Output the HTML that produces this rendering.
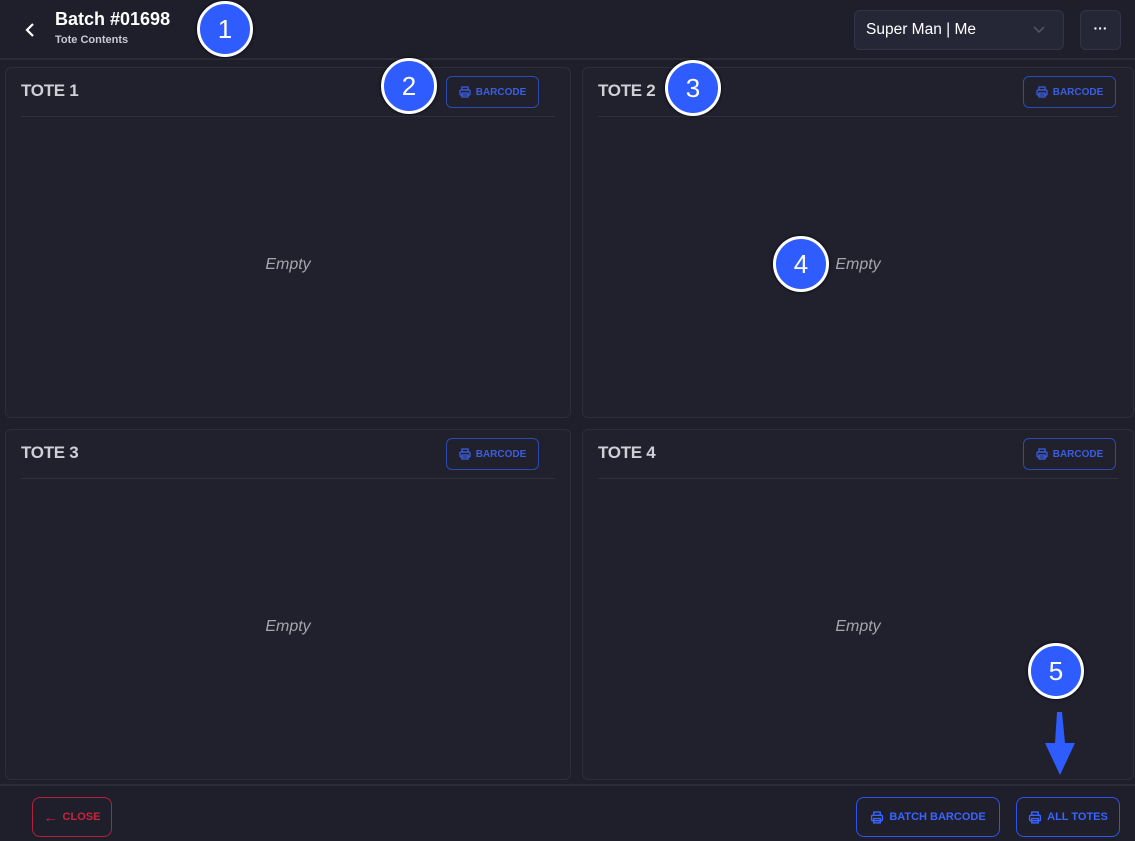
<!DOCTYPE html><html><head><style>
*{box-sizing:border-box;margin:0;padding:0}
body{width:1135px;height:841px;background:#1e1f2a;font-family:"Liberation Sans",sans-serif;position:relative;overflow:hidden;color:#fff}
.hdr{position:absolute;left:0;top:0;width:1135px;height:60px;background:#1e1f2b;border-bottom:2px solid #2b2c3a}
.abs{position:absolute}
.card{position:absolute;background:#20212d;border:1px solid #2d2e3c;border-radius:6px}
.card .t{position:absolute;left:15px;top:13px;font-size:17px;font-weight:bold;color:#cfd0d6;letter-spacing:-0.3px}
.card .ln{position:absolute;left:15px;right:15px;top:48px;border-top:1px solid #2f303e}
.card .e{position:absolute;left:0;right:0;top:188px;text-align:center;font-style:italic;color:#a4a5ad;font-size:16px}
.bc{position:absolute;top:8px;width:93px;height:32px;border:1px solid #2b4bb0;border-radius:6px;color:#3b5de0;font-size:10px;font-weight:bold;display:flex;align-items:center;justify-content:center;gap:5px}
.btn{position:absolute;border:1px solid #2f55e6;border-radius:8px;color:#3a63ff;font-weight:bold;font-size:11px;display:flex;align-items:center;justify-content:center;gap:5px}
.badge{position:absolute;width:56px;height:56px;border-radius:50%;background:#2f5cff;border:3px solid #fff;color:#fff;font-size:26px;display:flex;align-items:center;justify-content:center;box-shadow:0 0 3px #000}
</style></head><body>
<div class="hdr"></div>
<svg class="abs" style="left:24px;top:22px" width="12" height="16" viewBox="0 0 12 16"><path d="M9 2 L3 8 L9 14" stroke="#fff" stroke-width="2.2" fill="none"/></svg>
<div class="abs" style="left:55px;top:9px;font-size:18px;font-weight:bold">Batch #01698</div>
<div class="abs" style="left:55px;top:34px;font-size:11px;font-weight:bold;color:#c8c9d4">Tote Contents</div>
<div class="abs" style="left:854px;top:10px;width:210px;height:40px;border:1px solid #33344a;border-radius:6px;background:#262736;font-size:15.5px;padding:10px 11px">Super Man | Me<svg class="abs" style="right:18px;top:15px" width="12" height="8"><path d="M1 1 L6 6 L11 1" stroke="#555668" stroke-width="1.5" fill="none"/></svg></div>
<div class="abs" style="left:1080px;top:10px;width:41px;height:40px;border:1px solid #33344a;border-radius:6px;background:#262736;text-align:center;font-size:14px;line-height:34px;font-weight:bold">···</div>

<div class="card" style="left:5px;top:67px;width:566px;height:351px"><div class="t">TOTE 1</div><div class="bc" style="left:440px"><svg width="12" height="12" viewBox="0 0 12 12" fill="none" stroke="#3b5de0" stroke-width="1.3"><rect x="3" y="1" width="6" height="3"/><rect x="1" y="4" width="10" height="5" rx="1"/><rect x="3" y="7" width="6" height="4"/></svg>BARCODE</div><div class="ln"></div><div class="e">Empty</div></div>
<div class="card" style="left:582px;top:67px;width:552px;height:351px"><div class="t">TOTE 2</div><div class="bc" style="left:440px"><svg width="12" height="12" viewBox="0 0 12 12" fill="none" stroke="#3b5de0" stroke-width="1.3"><rect x="3" y="1" width="6" height="3"/><rect x="1" y="4" width="10" height="5" rx="1"/><rect x="3" y="7" width="6" height="4"/></svg>BARCODE</div><div class="ln"></div><div class="e">Empty</div></div>
<div class="card" style="left:5px;top:429px;width:566px;height:351px"><div class="t">TOTE 3</div><div class="bc" style="left:440px"><svg width="12" height="12" viewBox="0 0 12 12" fill="none" stroke="#3b5de0" stroke-width="1.3"><rect x="3" y="1" width="6" height="3"/><rect x="1" y="4" width="10" height="5" rx="1"/><rect x="3" y="7" width="6" height="4"/></svg>BARCODE</div><div class="ln"></div><div class="e">Empty</div></div>
<div class="card" style="left:582px;top:429px;width:552px;height:351px"><div class="t">TOTE 4</div><div class="bc" style="left:440px"><svg width="12" height="12" viewBox="0 0 12 12" fill="none" stroke="#3b5de0" stroke-width="1.3"><rect x="3" y="1" width="6" height="3"/><rect x="1" y="4" width="10" height="5" rx="1"/><rect x="3" y="7" width="6" height="4"/></svg>BARCODE</div><div class="ln"></div><div class="e">Empty</div></div>

<div class="abs" style="left:0;top:784px;width:1135px;height:57px;background:#1e1f2b;border-top:2px solid #2b2c3a"></div>
<div class="btn" style="left:32px;top:797px;width:80px;height:40px;border-color:#b3213a;color:#c8253f"><span style="font-size:14px;line-height:11px">←</span>CLOSE</div>
<div class="btn" style="left:856px;top:797px;width:144px;height:40px"><svg width="14" height="13" viewBox="0 0 12 12" fill="none" stroke="#3a63ff" stroke-width="1.3"><rect x="3" y="1" width="6" height="3"/><rect x="1" y="4" width="10" height="5" rx="1"/><rect x="3" y="7" width="6" height="4"/></svg>BATCH BARCODE</div>
<div class="btn" style="left:1016px;top:797px;width:104px;height:40px"><svg width="14" height="13" viewBox="0 0 12 12" fill="none" stroke="#3a63ff" stroke-width="1.3"><rect x="3" y="1" width="6" height="3"/><rect x="1" y="4" width="10" height="5" rx="1"/><rect x="3" y="7" width="6" height="4"/></svg>ALL TOTES</div>

<div class="badge" style="left:197px;top:1px">1</div>
<div class="badge" style="left:381px;top:58px">2</div>
<div class="badge" style="left:665px;top:60px">3</div>
<div class="badge" style="left:773px;top:236px">4</div>
<div class="badge" style="left:1028px;top:643px">5</div>
<svg class="abs" style="left:1040px;top:710px" width="40" height="68"><path d="M17 2 L22 2 L25 33 L35 33 L20 65 L5 33 L15 33 Z" fill="#2f5cff"/></svg>
</body></html>
